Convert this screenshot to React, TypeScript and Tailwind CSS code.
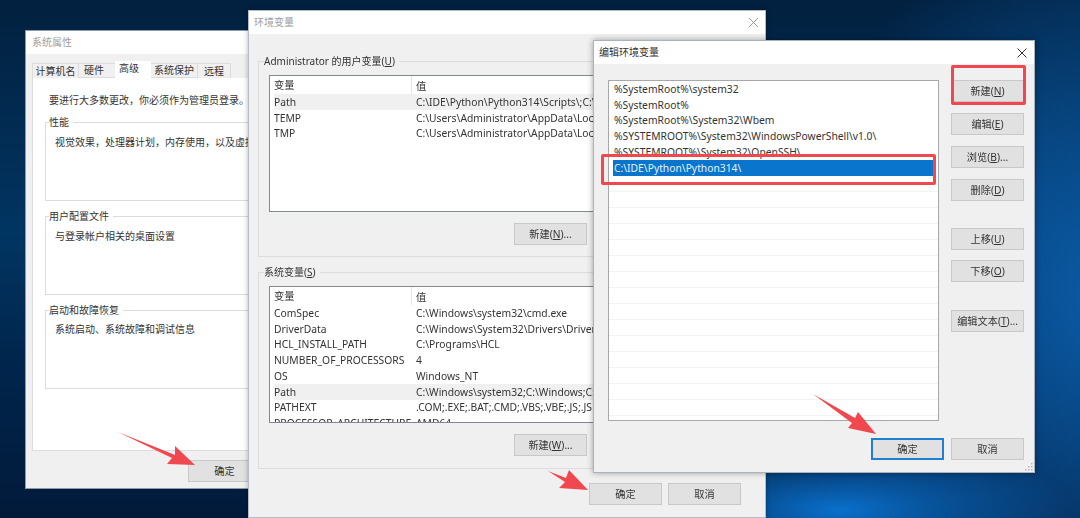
const font = "font-['Noto_Sans','Noto_Sans_CJK_SC',sans-serif]"

function Btn({ label, focus = false }: { label: React.ReactNode; focus?: boolean }) {
  return (
    <div
      className={`flex h-[22px] w-[73px] shrink-0 items-center justify-center whitespace-nowrap bg-[#e1e1e1] pt-[1px] text-[10.2px] text-[#333] ${
        focus ? "border-2 border-[#1f7fd0]" : "border border-[#c8c8c8]"
      }`}
    >
      {label}
    </div>
  )
}

function Acc({ before, ch, after = "" }: { before: string; ch: string; after?: string }) {
  return (
    <span>
      {before}(<span className="underline">{ch}</span>){after}
    </span>
  )
}

function Group({ legend, height, inset = "ml-[5px]", children }: { legend: React.ReactNode; height: string; inset?: string; children?: React.ReactNode }) {
  return (
    <fieldset className={`border border-[#dcdcdc] ${height}`}>
      <legend className={`h-[14px] pr-1 text-[10px] leading-[14px] text-[#333] ${inset}`}>{legend}</legend>
      {children}
    </fieldset>
  )
}

function VarList({ rows, selected, height }: { rows: [string, string][]; selected: string; height: string }) {
  return (
    <div className={`ml-[10px] mt-[7px] w-[478px] overflow-hidden border border-[#828790] bg-white text-[10.3px] leading-[16px] text-[#333] ${height}`}>
      <div className="flex h-[18px] items-center">
        <div className="h-full w-[142px] shrink-0 border-r border-[#e5e5e5] pl-[4px] pt-[1px]">变量</div>
        <div className="pl-[4px] pt-[1px]">值</div>
      </div>
      {rows.map(([name, value]) => (
        <div key={name} className={`ml-[4px] flex h-[15.75px] items-center whitespace-nowrap ${name === selected ? "bg-[#f0f0f0]" : ""}`}>
          <div className="w-[141px] shrink-0 overflow-hidden">{name}</div>
          <div className="pl-[1px]">{value}</div>
        </div>
      ))}
    </div>
  )
}

function SystemProps() {
  return (
    <div className="absolute left-[25px] top-[30px] flex h-[459px] w-[300px] flex-col border border-[#8d9aa8] bg-[#f0f0f0]">
      <div className="flex h-[23px] shrink-0 items-center bg-white pl-[6px] text-[10px] text-[#a0a0a0]">系统属性</div>
      <div className="ml-[6px] mt-[8px] flex h-[16px] items-end text-[10px] text-[#333]">
        <div className="flex h-[15px] w-[47px] items-center justify-center border border-b-0 border-[#dcdcdc]">计算机名</div>
        <div className="flex h-[15px] w-[36px] items-center border-y border-[#dcdcdc] pl-[5px]">硬件</div>
        <div className="flex h-[17px] w-[36px] items-center bg-white pb-[2px] pl-[4px]">高级</div>
        <div className="flex h-[15px] w-[46px] items-center justify-center border-y border-[#dcdcdc]">系统保护</div>
        <div className="flex h-[15px] w-[34px] items-center justify-center border border-b-0 border-[#dcdcdc]">远程</div>
      </div>
      <div className="ml-[6px] flex h-[373px] flex-col gap-[8px] border border-t-0 border-[#dcdcdc] bg-white pl-[12px] text-[10px] text-[#333]">
        <div className="ml-[4px] mt-[15px] h-[14px] leading-[14px]">要进行大多数更改，你必须作为管理员登录。</div>
        <Group legend="性能" height="h-[86px]" inset="ml-[3px]">
          <div className="ml-[9px] mt-[6px] whitespace-nowrap">视觉效果，处理器计划，内存使用，以及虚拟内存</div>
        </Group>
        <Group legend="用户配置文件" height="h-[86px]" inset="ml-[3px]">
          <div className="ml-[9px] mt-[6px]">与登录帐户相关的桌面设置</div>
        </Group>
        <Group legend="启动和故障恢复" height="h-[86px]" inset="ml-[3px]">
          <div className="ml-[9px] mt-[5px]">系统启动、系统故障和调试信息</div>
        </Group>
      </div>
      <div className="ml-[162px] mt-[9px]">
        <Btn label="确定" />
      </div>
    </div>
  )
}

const userRows: [string, string][] = [
  ["Path", "C:\\IDE\\Python\\Python314\\Scripts\\;C:\\IDE\\Python\\Python314\\"],
  ["TEMP", "C:\\Users\\Administrator\\AppData\\Local\\Temp"],
  ["TMP", "C:\\Users\\Administrator\\AppData\\Local\\Temp"],
]

const sysRows: [string, string][] = [
  ["ComSpec", "C:\\Windows\\system32\\cmd.exe"],
  ["DriverData", "C:\\Windows\\System32\\Drivers\\DriverData"],
  ["HCL_INSTALL_PATH", "C:\\Programs\\HCL"],
  ["NUMBER_OF_PROCESSORS", "4"],
  ["OS", "Windows_NT"],
  ["Path", "C:\\Windows\\system32;C:\\Windows;C:\\Windows\\System32\\Wbem"],
  ["PATHEXT", ".COM;.EXE;.BAT;.CMD;.VBS;.VBE;.JS;.JSE;.WSF;.WSH;.MSC"],
  ["PROCESSOR_ARCHITECTURE", "AMD64"],
]

function EnvVars() {
  return (
    <div className="absolute left-[248px] top-[10px] flex h-[508px] w-[518px] flex-col border border-[#b5bcc4] bg-[#f0f0f0] shadow-[0_0_5px_rgba(0,0,0,0.3)]">
      <div className="flex h-[23px] shrink-0 items-center justify-between bg-white pl-[5px] pr-[6px] text-[10px] text-[#a0a0a0]">
        环境变量
        <svg width="11" height="11" viewBox="0 0 11 11" stroke="#9a9a9a" strokeWidth="1"><path d="M1 1l9 9M10 1l-9 9" /></svg>
      </div>
      <div className="ml-[9px] mt-[20px] flex w-[498px] flex-col">
        <Group legend={<Acc before="Administrator 的用户变量" ch="U" />} height="h-[203px]">
          <VarList rows={userRows} selected="Path" height="h-[137px]" />
          <div className="mr-[10px] mt-[11px] flex justify-end gap-[6px]">
            <Btn label={<Acc before="新建" ch="N" after="..." />} />
            <Btn label="编辑(E)..." />
            <Btn label="删除(D)" />
          </div>
        </Group>
        <div className="mt-[8px]">
          <Group legend={<Acc before="系统变量" ch="S" />} height="h-[204px]">
            <VarList rows={sysRows} selected="Path" height="h-[137px]" />
            <div className="mr-[10px] mt-[11px] flex justify-end gap-[6px]">
              <Btn label={<Acc before="新建" ch="W" after="..." />} />
              <Btn label="编辑(I)..." />
              <Btn label="删除(L)" />
            </div>
          </Group>
        </div>
      </div>
      <div className="mt-[14px] flex justify-end gap-[6px] pr-[24px]">
        <Btn label="确定" />
        <Btn label="取消" />
      </div>
    </div>
  )
}

const pathRows = [
  "%SystemRoot%\\system32",
  "%SystemRoot%",
  "%SystemRoot%\\System32\\Wbem",
  "%SYSTEMROOT%\\System32\\WindowsPowerShell\\v1.0\\",
  "%SYSTEMROOT%\\System32\\OpenSSH\\",
  "C:\\IDE\\Python\\Python314\\",
]

function EditEnv() {
  return (
    <div className="absolute left-[593px] top-[40px] flex h-[433px] w-[442px] flex-col border border-[#aab2bb] bg-[#f0f0f0] shadow-[0_0_6px_rgba(0,0,0,0.35)]">
      <div className="flex h-[23px] shrink-0 items-center justify-between bg-white pl-[5px] pr-[7px] text-[10px] text-[#333]">
        编辑环境变量
        <svg width="10" height="10" viewBox="0 0 10 10" stroke="#333" strokeWidth="1"><path d="M0.5 0.5l9 9M9.5 0.5l-9 9" /></svg>
      </div>
      <div className="ml-[14px] mt-[16px] flex gap-[12px]">
        <div className="flex h-[341px] w-[331px] flex-col overflow-hidden border border-[#a8a8a8] bg-white text-[10.3px] leading-[16px] text-[#333]">
          {pathRows.map((row, i) => (
            <div key={row} className={`ml-[4px] mr-[2px] flex h-[15.75px] shrink-0 items-center whitespace-nowrap pl-[1px] ${i === 5 ? "bg-[#0a75cc] text-[#e6f2fb]" : ""}`}>
              {row}
            </div>
          ))}
          {Array.from({ length: 15 }, (_, i) => (
            <div key={i} className="h-[16px] shrink-0 border-b border-[#f3f3f3]" />
          ))}
        </div>
        <div className="flex flex-col">
          <div className="flex flex-col gap-[11px]">
            <Btn label={<Acc before="新建" ch="N" />} />
            <Btn label={<Acc before="编辑" ch="E" />} />
            <Btn label={<Acc before="浏览" ch="B" after="..." />} />
            <Btn label={<Acc before="删除" ch="D" />} />
          </div>
          <div className="mt-[27px] flex flex-col gap-[10px]">
            <Btn label={<Acc before="上移" ch="U" />} />
            <Btn label={<Acc before="下移" ch="O" />} />
          </div>
          <div className="mt-[28px]">
            <Btn label={<Acc before="编辑文本" ch="T" after="..." />} />
          </div>
        </div>
      </div>
      <div className="mt-[17px] flex justify-end gap-[7px] pr-[10px]">
        <Btn label="确定" focus />
        <Btn label="取消" />
      </div>
      <svg className="absolute bottom-[1px] right-[1px]" width="9" height="9" viewBox="0 0 9 9" fill="#b5b5b5">
        <rect x="7" y="1" width="1.5" height="1.5" />
        <rect x="4" y="4" width="1.5" height="1.5" />
        <rect x="7" y="4" width="1.5" height="1.5" />
        <rect x="1" y="7" width="1.5" height="1.5" />
        <rect x="4" y="7" width="1.5" height="1.5" />
        <rect x="7" y="7" width="1.5" height="1.5" />
      </svg>
    </div>
  )
}

export default function App() {
  return (
    <div className={`relative h-[518px] w-[1080px] overflow-hidden bg-[radial-gradient(ellipse_230px_70px_at_840px_510px,#0a70cc_0%,rgba(10,100,190,0)_100%),radial-gradient(ellipse_300px_400px_at_1100px_300px,#0b5aa5_0%,rgba(10,80,150,0)_100%),linear-gradient(180deg,#02203f_0%,#013562_45%,#00254c_70%,#021a3a_100%)] ${font}`}>
      <div className="blur-[0.5px]">
        <SystemProps />
        <EnvVars />
        <EditEnv />
        {/* annotations */}
        <div className="absolute left-[951px] top-[65px] h-[40px] w-[75px] rounded-[2px] border-[3px] border-[#f0484e]" />
        <div className="absolute left-[601px] top-[154px] h-[31px] w-[335px] rounded-[2px] border-[3px] border-[#f0484e]" />
        <svg className="absolute left-0 top-0" width="1080" height="518" fill="#f0484e">
          <polygon points="118,432 175,455 175,446 195,465 167,464 172,458" />
          <polygon points="548,471 566,478 569,470 588,490 559,488 565,482" />
          <polygon points="813,394 855,418 858,412 876,434 848,428 852,423" />
        </svg>
      </div>
    </div>
  )
}
